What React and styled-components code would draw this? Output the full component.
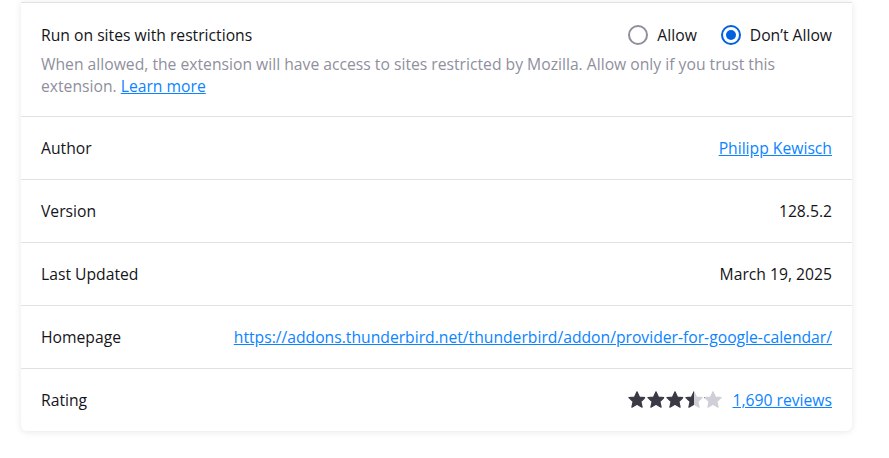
import React from 'react';
import styled, { createGlobalStyle } from 'styled-components';

const GlobalStyle = createGlobalStyle`
  body {
    margin: 0;
    background: #ffffff;
    font-family: "Open Sans", "Noto Sans", sans-serif;
    color: #15141a;
  }
`;

const Page = styled.div`
  padding: 2px 37px 26px 21px;
`;

const Card = styled.section`
  background: #ffffff;
  border-radius: 0 0 6px 6px;
  box-shadow: 0 1px 6px rgba(58, 57, 68, 0.12);
`;

const Row = styled.div`
  display: flex;
  align-items: center;
  justify-content: space-between;
  gap: 16px;
  padding: 20px 20px;
  border-top: 1px solid #e0e0e6;
  font-size: 15.7px;
  line-height: 22px;
`;

const Block = styled.div`
  border-top: 1px solid #e0e0e6;
  padding: 21px 20px 19px;
  font-size: 15.7px;
  line-height: 22px;
`;

const Head = styled.div`
  display: flex;
  justify-content: space-between;
  align-items: center;
`;

const Desc = styled.p`
  margin: 7px 0 0;
  color: #8f8f9d;
  max-width: 760px;
`;

const Label = styled.span``;

const Value = styled.span`
  text-align: right;
`;

const Link = styled.a`
  color: #0a84ff;
  text-decoration: underline;
  cursor: pointer;
`;

const Radios = styled.div`
  display: flex;
  align-items: center;
  gap: 24px;
`;

const Option = styled.label`
  display: flex;
  align-items: center;
  gap: 9px;
`;

const Dot = styled.span`
  width: 20px;
  height: 20px;
  box-sizing: border-box;
  border-radius: 50%;
  border: 2px solid ${p => (p.$on ? '#0061e0' : '#8f8f9d')};
  display: flex;
  align-items: center;
  justify-content: center;
  &::after {
    content: '';
    display: ${p => (p.$on ? 'block' : 'none')};
    width: 10px;
    height: 10px;
    border-radius: 50%;
    background: #0061e0;
  }
`;

const RatingBox = styled.div`
  display: flex;
  align-items: center;
  gap: 11px;
`;

const Stars = styled.div`
  display: flex;
  gap: 1px;
`;

const STAR = 'M9 0.8l2.4 5.2 5.7.6-4.2 3.9 1.2 5.7-5.1-2.9-5.1 2.9 1.2-5.7-4.2-3.9 5.7-.6z';

function Star({ fill }) {
  const id = `half-${fill}`;
  return (
    <svg width="18" height="18" viewBox="0 0 18 18">
      <defs>
        <linearGradient id={id}>
          <stop offset={fill} stopColor="#3a3944" />
          <stop offset={fill} stopColor="#cfcfd8" />
        </linearGradient>
      </defs>
      <path d={STAR} fill={`url(#${id})`} stroke={`url(#${id})`} strokeWidth="1.2" strokeLinejoin="round" />
    </svg>
  );
}

const details = [
  { label: 'Author', value: <Link>Philipp Kewisch</Link> },
  { label: 'Version', value: '128.5.2' },
  { label: 'Last Updated', value: 'March 19, 2025' },
  { label: 'Homepage', value: <Link>https://addons.thunderbird.net/thunderbird/addon/provider-for-google-calendar/</Link> },
];

export default function App() {
  const rating = [1, 1, 1, 0.5, 0];
  return (
    <>
      <GlobalStyle />
      <Page>
        <Card>
          <Block>
            <Head>
              <Label>Run on sites with restrictions</Label>
              <Radios>
                <Option><Dot />Allow</Option>
                <Option><Dot $on />Don’t Allow</Option>
              </Radios>
            </Head>
            <Desc>
              When allowed, the extension will have access to sites restricted by Mozilla. Allow only if you trust this
              extension. <Link>Learn more</Link>
            </Desc>
          </Block>
          {details.map(d => (
            <Row key={d.label}>
              <Label>{d.label}</Label>
              <Value>{d.value}</Value>
            </Row>
          ))}
          <Row>
            <Label>Rating</Label>
            <RatingBox>
              <Stars>
                {rating.map((f, i) => <Star key={i} fill={f} />)}
              </Stars>
              <Link>1,690 reviews</Link>
            </RatingBox>
          </Row>
        </Card>
      </Page>
    </>
  );
}
